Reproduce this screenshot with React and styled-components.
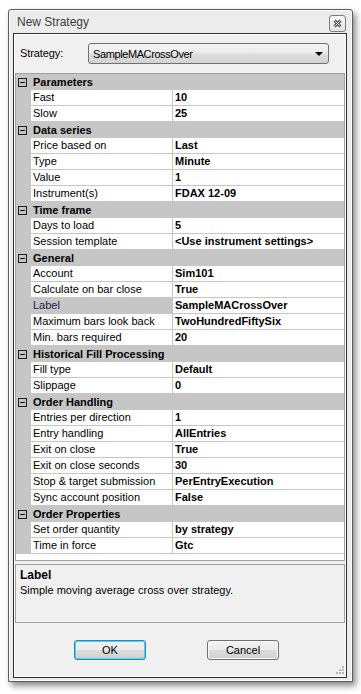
import styled, { createGlobalStyle } from "styled-components";

const GlobalStyle = createGlobalStyle`
    html, body {
        margin: 0;
        padding: 0;
        background: #ffffff;
    }
    body {
        font-family: "Liberation Sans", Arial, sans-serif;
        font-size: 11px;
        color: #000;
    }
`;

const sections = [
    { title: "Parameters", rows: [["Fast", "10"], ["Slow", "25"]] },
    {
        title: "Data series",
        rows: [
            ["Price based on", "Last"],
            ["Type", "Minute"],
            ["Value", "1"],
            ["Instrument(s)", "FDAX 12-09"],
        ],
    },
    {
        title: "Time frame",
        rows: [
            ["Days to load", "5"],
            ["Session template", "<Use instrument settings>"],
        ],
    },
    {
        title: "General",
        rows: [
            ["Account", "Sim101"],
            ["Calculate on bar close", "True"],
            ["Label", "SampleMACrossOver", true],
            ["Maximum bars look back", "TwoHundredFiftySix"],
            ["Min. bars required", "20"],
        ],
    },
    {
        title: "Historical Fill Processing",
        rows: [
            ["Fill type", "Default"],
            ["Slippage", "0"],
        ],
    },
    {
        title: "Order Handling",
        rows: [
            ["Entries per direction", "1"],
            ["Entry handling", "AllEntries"],
            ["Exit on close", "True"],
            ["Exit on close seconds", "30"],
            ["Stop & target submission", "PerEntryExecution"],
            ["Sync account position", "False"],
        ],
    },
    {
        title: "Order Properties",
        rows: [
            ["Set order quantity", "by strategy"],
            ["Time in force", "Gtc"],
        ],
    },
];

export default function App() {
    return (
        <Page>
            <GlobalStyle />
            <Window>
                <TitleBar>
                    <Title>New Strategy</Title>
                    <CloseButton>
                        <svg width="9" height="9" viewBox="0 0 9 9">
                            <path d="M1.5 1.5 L7.5 7.5 M7.5 1.5 L1.5 7.5" stroke="#4a4a4a" strokeWidth="3" />
                            <path d="M1.5 1.5 L7.5 7.5 M7.5 1.5 L1.5 7.5" stroke="#ffffff" strokeWidth="1" />
                        </svg>
                    </CloseButton>
                </TitleBar>

                <Client>
                    <StrategyRow>
                        <StrategyLabel>Strategy:</StrategyLabel>
                        <Combo>
                            <ComboText>SampleMACrossOver</ComboText>
                            <ComboArrow />
                        </Combo>
                    </StrategyRow>

                    <Grid>
                        {sections.map((section) => (
                            <div key={section.title}>
                                <HeaderRow>
                                    <Gutter>
                                        <Toggle />
                                    </Gutter>
                                    <HeaderText>{section.title}</HeaderText>
                                </HeaderRow>
                                {section.rows.map(([label, value, selected]) => (
                                    <PropRow key={label}>
                                        <Gutter />
                                        <PropLabel $selected={selected}>{label}</PropLabel>
                                        <PropValue>{value}</PropValue>
                                    </PropRow>
                                ))}
                            </div>
                        ))}
                    </Grid>

                    <Description>
                        <DescTitle>Label</DescTitle>
                        <DescText>Simple moving average cross over strategy.</DescText>
                    </Description>

                    <ButtonBar>
                        <Button $default>OK</Button>
                        <Button>Cancel</Button>
                        <Grip>
                            <svg width="9" height="9" viewBox="0 0 9 9">
                                <rect x="7" y="1" width="2" height="2" fill="#b8b8b8" />
                                <rect x="7" y="4" width="2" height="2" fill="#b8b8b8" />
                                <rect x="7" y="7" width="2" height="2" fill="#b8b8b8" />
                                <rect x="4" y="4" width="2" height="2" fill="#b8b8b8" />
                                <rect x="4" y="7" width="2" height="2" fill="#b8b8b8" />
                                <rect x="1" y="7" width="2" height="2" fill="#b8b8b8" />
                            </svg>
                        </Grip>
                    </ButtonBar>
                </Client>
            </Window>
        </Page>
    );
}

const Page = styled.div`
    padding: 9px 0 0 8px;
    width: 361px;
    height: 694px;
    box-sizing: border-box;
`;

const Window = styled.div`
    width: 345px;
    height: 673px;
    box-sizing: border-box;
    display: flex;
    flex-direction: column;
    background: #ececec;
    border: 1px solid #5c5c5c;
    border-radius: 3px 3px 0 0;
    box-shadow: inset 0 0 0 1px #fbfbfb, 3px 4px 6px rgba(0, 0, 0, 0.45);
    padding: 0 5px 3px 4px;
`;

const TitleBar = styled.div`
    height: 23px;
    flex-shrink: 0;
    display: flex;
    align-items: flex-start;
    justify-content: space-between;
    padding: 5px 1px 0 4px;
    box-sizing: border-box;
`;

const Title = styled.div`
    font-size: 12px;
    color: #3c3c3c;
    line-height: 15px;
`;

const CloseButton = styled.div`
    width: 17px;
    height: 17px;
    box-sizing: border-box;
    border: 1px solid #7a7a7a;
    border-radius: 3px;
    background: linear-gradient(#fbfbfb, #e2e2e2);
    display: flex;
    align-items: center;
    justify-content: center;
`;

const Client = styled.div`
    flex: 1;
    display: flex;
    flex-direction: column;
    background: #f0f0f0;
    border: 1px solid #2e2e2e;
    box-shadow: inset 0 0 0 1px #ffffff;
    min-height: 0;
`;

const StrategyRow = styled.div`
    height: 39px;
    flex-shrink: 0;
    display: flex;
    align-items: flex-start;
    padding: 9px 0 0 6px;
    box-sizing: border-box;
`;

const StrategyLabel = styled.div`
    width: 68px;
    line-height: 21px;
    font-size: 11px;
    letter-spacing: -0.1px;
`;

const Combo = styled.div`
    width: 241px;
    height: 21px;
    box-sizing: border-box;
    border: 1px solid #707070;
    border-radius: 3px;
    background: linear-gradient(#f4f4f4 0%, #ececec 48%, #dedede 52%, #d2d2d2 100%);
    display: flex;
    align-items: center;
    justify-content: space-between;
    padding: 0 5px 0 4px;
`;

const ComboText = styled.span`
    font-size: 11px;
    letter-spacing: -0.4px;
`;

const ComboArrow = styled.span`
    width: 0;
    height: 0;
    border-left: 4px solid transparent;
    border-right: 4px solid transparent;
    border-top: 4px solid #000;
    margin-top: 1px;
`;

const Grid = styled.div`
    height: 488px;
    flex-shrink: 0;
    box-sizing: border-box;
    margin: 0 1px 0 1px;
    border: 1px solid #a0a0a0;
    background: #ffffff;
    overflow: hidden;
`;

const HeaderRow = styled.div`
    display: flex;
    height: 16px;
    background: #c6c6c6;
`;

const Gutter = styled.div`
    width: 15px;
    flex-shrink: 0;
    background: #c6c6c6;
    display: flex;
    align-items: center;
    padding-left: 2px;
    box-sizing: border-box;
`;

const Toggle = styled.div`
    width: 9px;
    height: 9px;
    box-sizing: border-box;
    border: 1px solid #1e1e1e;
    position: relative;
    &::after {
        content: "";
        position: absolute;
        left: 1px;
        right: 1px;
        top: 3px;
        height: 1px;
        background: #000;
    }
`;

const HeaderText = styled.div`
    font-weight: bold;
    line-height: 16px;
    padding-left: 2px;
    white-space: nowrap;
`;

const PropRow = styled.div`
    display: flex;
    height: 16px;
`;

const PropLabel = styled.div`
    width: 141px;
    flex-shrink: 0;
    box-sizing: content-box;
    border-right: 1px solid #c6c6c6;
    border-bottom: 1px solid #c6c6c6;
    height: 15px;
    line-height: 15px;
    padding-left: 2px;
    margin-left: 0;
    white-space: nowrap;
    overflow: hidden;
    background: ${(p) => (p.$selected ? "#c6c6c6" : "#ffffff")};
    color: ${(p) => (p.$selected ? "#1c1848" : "#000")};
    width: 139px;
`;

const PropValue = styled.div`
    flex: 1;
    height: 15px;
    line-height: 15px;
    border-bottom: 1px solid #c6c6c6;
    padding-left: 2px;
    font-weight: bold;
    white-space: nowrap;
    overflow: hidden;
`;

const Description = styled.div`
    height: 59px;
    flex-shrink: 0;
    box-sizing: border-box;
    margin: 3px 1px 0 1px;
    border: 1px solid #a0a0a0;
    padding: 3px 4px 0 4px;
`;

const DescTitle = styled.div`
    font-weight: bold;
    font-size: 12px;
    line-height: 14px;
`;

const DescText = styled.div`
    font-size: 11px;
    line-height: 14px;
    margin-top: 1px;
`;

const ButtonBar = styled.div`
    flex: 1;
    position: relative;
    display: flex;
    align-items: flex-start;
    gap: 61px;
    padding: 17px 0 0 60px;
`;

const Button = styled.div`
    width: 72px;
    height: 20px;
    box-sizing: border-box;
    border: 1px solid ${(p) => (p.$default ? "#3c7fb1" : "#707070")};
    border-radius: 3px;
    background: linear-gradient(#f2f2f2 0%, #ebebeb 48%, #dddddd 52%, #cfcfcf 100%);
    box-shadow: ${(p) => (p.$default ? "inset 0 0 0 1px #48d4f8" : "inset 0 0 0 1px #fcfcfc")};
    display: flex;
    align-items: center;
    justify-content: center;
    font-size: 11px;
`;

const Grip = styled.div`
    position: absolute;
    right: 2px;
    bottom: 3px;
    width: 9px;
    height: 9px;
    display: flex;
`;
